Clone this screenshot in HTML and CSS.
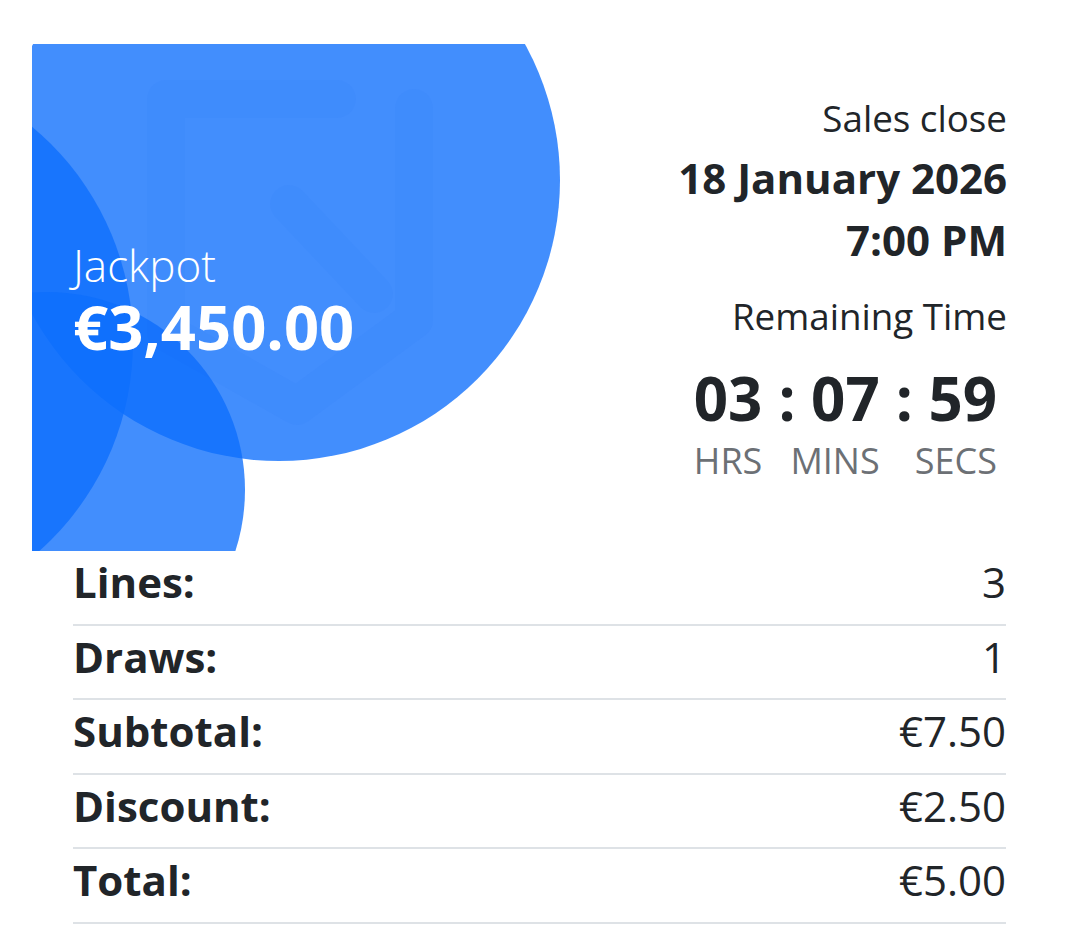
FILE: index.html
```html
<!DOCTYPE html>
<html lang="en">
<head>
<meta charset="utf-8">
<title>Jackpot</title>
<link rel="stylesheet" href="styles.css">
</head>
<body>
<main class="page">
  <section class="card">
    <div class="bubble bubble-main"></div>
    <div class="bubble bubble-left"></div>
    <div class="bubble bubble-low"></div>
    <svg class="watermark" width="450" height="420" viewBox="0 0 450 420" aria-hidden="true">
      <g fill="none" stroke="rgba(13,90,230,0.035)" stroke-width="38" stroke-linecap="round" stroke-linejoin="round">
        <path d="M305 55 H134 V288 L265 362 L382 276 V64"/>
        <path d="M257 160 L342 250"/>
      </g>
    </svg>
    <div class="jackpot">
      <div class="jackpot-label">Jackpot</div>
      <div class="jackpot-amount">€3,450.00</div>
    </div>
    <div class="sales">
      <div class="sales-caption">Sales close</div>
      <div class="sales-date first">18 January 2026</div>
      <div class="sales-date">7:00 PM</div>
      <div class="sales-caption remaining">Remaining Time</div>
      <div class="countdown">
        <div class="unit"><span class="num">03</span><span class="lbl">HRS</span></div>
        <div class="unit"><span class="num">:&nbsp;07</span><span class="lbl">MINS</span></div>
        <div class="unit"><span class="num">:&nbsp;59</span><span class="lbl">SECS</span></div>
      </div>
    </div>
  </section>
  <section class="summary">
    <div class="row"><span class="key">Lines:</span><span class="val">3</span></div>
    <div class="row"><span class="key">Draws:</span><span class="val">1</span></div>
    <div class="row"><span class="key">Subtotal:</span><span class="val">€7.50</span></div>
    <div class="row"><span class="key">Discount:</span><span class="val">€2.50</span></div>
    <div class="row"><span class="key">Total:</span><span class="val">€5.00</span></div>
  </section>
</main>
</body>
</html>
```
FILE: styles.css
```css
html, body {
  margin: 0;
  padding: 0;
  background: #ffffff;
}
body {
  font-family: "Open Sans", "Noto Sans", "Liberation Sans", sans-serif;
  color: #212529;
}
.page {
  padding-top: 44px;
}
.card {
  position: relative;
  overflow: hidden;
  margin: 0 32px;
  height: 507px;
  padding: 0 40px 0 41px;
  display: flex;
  justify-content: space-between;
  align-items: flex-start;
  background: #ffffff;
}
.bubble {
  position: absolute;
  border-radius: 50%;
  background: rgba(13, 110, 253, 0.78);
}
.bubble-main {
  left: -34px;
  top: -145px;
  width: 562px;
  height: 562px;
}
.bubble-left {
  left: -459px;
  top: 18px;
  width: 560px;
  height: 560px;
}
.bubble-low {
  left: -183px;
  top: 248px;
  width: 396px;
  height: 396px;
}
.watermark {
  position: absolute;
  left: 0;
  top: 0;
}
.jackpot {
  position: relative;
  margin-top: 190px;
  color: #ffffff;
}
.jackpot-label {
  font-size: 44px;
  font-weight: 300;
  line-height: 63px;
}
.jackpot-amount {
  font-size: 61.5px;
  font-weight: 700;
  line-height: 58px;
}
.sales {
  position: relative;
  margin-top: 47px;
  display: flex;
  flex-direction: column;
  align-items: flex-end;
  text-align: right;
}
.sales-caption {
  font-size: 36.75px;
  line-height: 54px;
}
.sales-date {
  font-size: 42px;
  font-weight: 700;
  line-height: 62px;
}
.sales-date.first {
  margin-top: 2px;
}
.remaining {
  margin-top: 18px;
}
.countdown {
  margin-top: 19px;
  margin-right: 10px;
  display: flex;
  gap: 16px;
}
.unit {
  display: flex;
  flex-direction: column;
  align-items: flex-end;
}
.num {
  font-size: 60px;
  font-weight: 700;
  line-height: 72px;
}
.lbl {
  font-size: 36px;
  line-height: 54px;
  color: #6c7075;
}
.summary {
  margin: 0 73px;
}
.row {
  display: flex;
  justify-content: space-between;
  font-size: 42px;
  line-height: 62.5px;
  padding-bottom: 10px;
  border-bottom: 2px solid #dee2e6;
}
.key {
  font-weight: 700;
}
.val {
  font-weight: 400;
}
```
